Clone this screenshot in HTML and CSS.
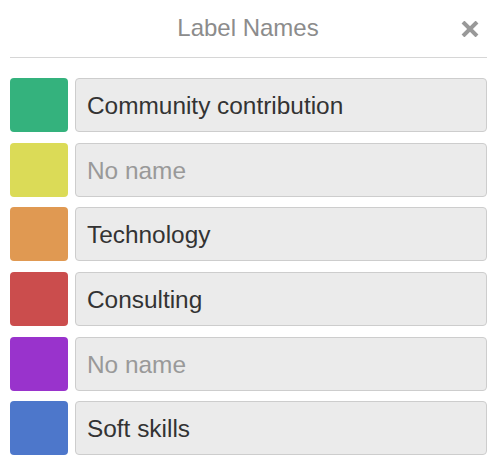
FILE: index.html
```html
<!DOCTYPE html>
<html lang="en">
  <head>
    <meta charset="UTF-8" />
    <title>Label Names</title>
    <link rel="stylesheet" href="styles.css">
  </head>
  <body>
    <div class="popover">
      <div class="popover-header">
        <span class="popover-title">Label Names</span>
        <svg class="popover-close" width="18" height="16" viewBox="0 0 18 16">
          <path d="M2 1 L16 15 M16 1 L2 15" stroke="#999" stroke-width="4" stroke-linecap="butt" />
        </svg>
      </div>

      <div class="label-list">
        <div class="label-row">
          <span class="swatch green"></span>
          <input type="text" class="label-name" value="Community contribution" />
        </div>
        <div class="label-row">
          <span class="swatch yellow"></span>
          <input type="text" class="label-name" placeholder="No name" />
        </div>
        <div class="label-row">
          <span class="swatch orange"></span>
          <input type="text" class="label-name" value="Technology" />
        </div>
        <div class="label-row">
          <span class="swatch red"></span>
          <input type="text" class="label-name" value="Consulting" />
        </div>
        <div class="label-row">
          <span class="swatch purple"></span>
          <input type="text" class="label-name" placeholder="No name" />
        </div>
        <div class="label-row">
          <span class="swatch blue"></span>
          <input type="text" class="label-name" value="Soft skills" />
        </div>
      </div>
    </div>
  </body>
</html>
```

FILE: styles.css
```css
* {
  margin: 0;
  padding: 0;
  box-sizing: border-box;
  font-family: "Liberation Sans", Arial, Helvetica, sans-serif;
}

body {
  background: white;
}

.popover {
  padding: 0 13px 0 10px;
}

.popover-header {
  position: relative;
  height: 58px;
  display: flex;
  align-items: center;
  justify-content: center;
  border-bottom: 1px solid #d6d6d6;
}

.popover-title {
  font-size: 24px;
  color: #8c8c8c;
  margin-left: -1px;
  margin-top: -2px;
}

.popover-close {
  position: absolute;
  right: 8px;
  top: 21px;
}

.label-list {
  display: flex;
  flex-direction: column;
  gap: 10.7px;
  padding-top: 20px;
}

.label-row {
  display: flex;
  gap: 7px;
  height: 54px;
}

.swatch {
  width: 58px;
  flex-shrink: 0;
  border-radius: 4px;
}

.green { background: #34b27d; }
.yellow { background: #dbdb57; }
.orange { background: #e09952; }
.red { background: #cb4d4d; }
.purple { background: #9933cc; }
.blue { background: #4d77cb; }

.label-name {
  flex: 1;
  min-width: 0;
  background: #ebebeb;
  border: 1.5px solid #cdcdcd;
  border-radius: 4px;
  padding: 2px 11px 0;
  font-size: 24.4px;
  color: #333;
  outline: none;
}

.label-name::placeholder {
  color: #999;
}
```
